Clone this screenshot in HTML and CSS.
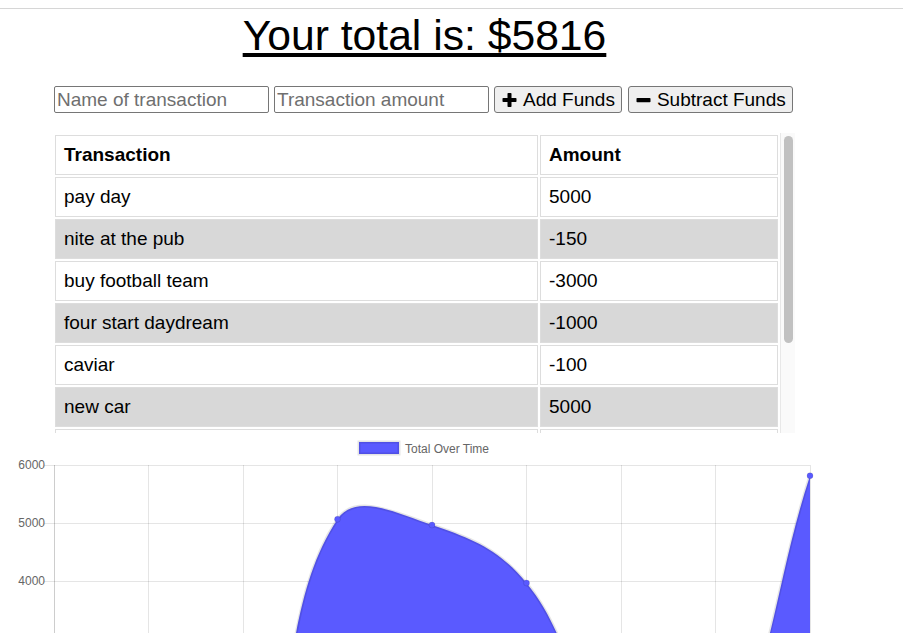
FILE: index.html
```html
<!DOCTYPE html>
<html lang="en">
<head>
<meta charset="utf-8">
<title>Budget Tracker</title>
<link rel="stylesheet" href="styles.css">
</head>
<body>
<div class="topbar"></div>
<main class="main">
  <h1 class="title"><span>Your total is: $5816</span></h1>
  <form class="controls">
    <input class="field" type="text" placeholder="Name of transaction">
    <input class="field" type="number" placeholder="Transaction amount">
    <button class="btn" type="button">
      <svg class="icon" viewBox="0 0 15 14"><rect x="5.5" y="0" width="4" height="14" rx="0.8"/><rect x="0.5" y="5" width="14" height="4" rx="0.8"/></svg>
      <span>Add Funds</span>
    </button>
    <button class="btn" type="button">
      <svg class="icon" viewBox="0 0 15 14"><rect x="0.5" y="5" width="14" height="4.3" rx="0.8"/></svg>
      <span>Subtract Funds</span>
    </button>
  </form>
  <div class="table-box">
    <div class="table-view">
      <table class="tx">
        <thead>
          <tr><th>Transaction</th><th class="col-amount">Amount</th></tr>
        </thead>
        <tbody>
          <tr><td>pay day</td><td>5000</td></tr>
          <tr><td>nite at the pub</td><td>-150</td></tr>
          <tr><td>buy football team</td><td>-3000</td></tr>
          <tr><td>four start daydream</td><td>-1000</td></tr>
          <tr><td>caviar</td><td>-100</td></tr>
          <tr><td>new car</td><td>5000</td></tr>
          <tr><td>bus fare</td><td>-30</td></tr>
          <tr><td>coffee</td><td>-4</td></tr>
          <tr><td>starting balance</td><td>100</td></tr>
        </tbody>
      </table>
    </div>
    <div class="scrollbar"><div class="thumb"></div></div>
  </div>
</main>
<svg class="chart" viewBox="0 433 903 200" width="903" height="200">
  <g class="legend">
    <rect x="359" y="442" width="40" height="12" fill="#5a5aff" stroke="rgba(0,0,0,0.1)" stroke-width="3"/>
    <text x="405" y="452.6">Total Over Time</text>
  </g>
  <g class="ylabels">
    <text x="45" y="469.3">6000</text>
    <text x="45" y="527.3">5000</text>
    <text x="45" y="585.3">4000</text>
  </g>
  <g class="grid" stroke="rgba(0,0,0,0.1)" stroke-width="1">
    <line x1="44" y1="465.5" x2="810" y2="465.5"/>
    <line x1="44" y1="523.5" x2="810" y2="523.5"/>
    <line x1="44" y1="581.5" x2="810" y2="581.5"/>
    <line x1="54.5" y1="465" x2="54.5" y2="640"/>
    <line x1="54.5" y1="465" x2="54.5" y2="640"/>
    <line x1="148.5" y1="465" x2="148.5" y2="640"/>
    <line x1="243.5" y1="465" x2="243.5" y2="640"/>
    <line x1="337.5" y1="465" x2="337.5" y2="640"/>
    <line x1="432.5" y1="465" x2="432.5" y2="640"/>
    <line x1="526.5" y1="465" x2="526.5" y2="640"/>
    <line x1="621.5" y1="465" x2="621.5" y2="640"/>
    <line x1="715.5" y1="465" x2="715.5" y2="640"/>
    <line x1="810.5" y1="465" x2="810.5" y2="640"/>
  </g>
  <path fill="#5a5aff" d="M54,813 L54,807.2 L148.5,807.4 L243,809.2 C300.7,721.2 279.8,605.9 337.5,519.2 C355.4,492.3 397.2,513.25 432,525 C472.8,538.8 499.4,549.7 526.5,583 C575,642.5 569.9,707.6 621,757 C645.5,780.7 697.6,792.4 715.5,765.7 C773.2,679.9 772.2,591.7 810,475.7 L810,813 Z"/>
  <path fill="none" stroke="rgba(0,0,0,0.1)" stroke-width="3" d="M54,807.2 L148.5,807.4 L243,809.2 C300.7,721.2 279.8,605.9 337.5,519.2 C355.4,492.3 397.2,513.25 432,525 C472.8,538.8 499.4,549.7 526.5,583 C575,642.5 569.9,707.6 621,757 C645.5,780.7 697.6,792.4 715.5,765.7 C773.2,679.9 772.2,591.7 810,475.7"/>
  <g class="points" fill="#5a5aff" stroke="rgba(0,0,0,0.1)" stroke-width="1">
    <circle cx="337.5" cy="519.2" r="3"/>
    <circle cx="432" cy="525" r="3"/>
    <circle cx="526.5" cy="583" r="3"/>
    <circle cx="810" cy="475.7" r="3"/>
  </g>
</svg>
</body>
</html>
```

FILE: styles.css
```css
html, body {
  margin: 0;
  padding: 0;
  overflow: hidden;
}

body {
  padding-top: 8px;
  font-family: "Liberation Sans", Arial, sans-serif;
  color: #000;
  background: #fff;
}

.topbar {
  border-top: 1px solid #d6d6d6;
}

.main {
  width: 741px;
  margin-left: 54px;
}

.title {
  margin: 2px 0 0;
  font-size: 42.67px;
  line-height: 49px;
  font-weight: normal;
  text-align: center;
}

.title span {
  text-decoration: underline;
}

.controls {
  display: flex;
  align-items: stretch;
  gap: 5px;
  height: 27px;
  margin: 26px 0 0;
}

.field {
  box-sizing: border-box;
  width: 215px;
  height: 27px;
  margin: 0;
  padding: 1px 2px;
  border: 1px solid #767676;
  border-radius: 2px;
  font-family: "Liberation Sans", Arial, sans-serif;
  font-size: 19px;
  color: #000;
  background: #fff;
  -moz-appearance: textfield;
}

.field::-webkit-outer-spin-button,
.field::-webkit-inner-spin-button {
  -webkit-appearance: none;
  margin: 0;
}

.field::placeholder {
  color: #6f6f6f;
}

.btn {
  box-sizing: border-box;
  display: flex;
  align-items: center;
  gap: 6px;
  height: 27px;
  margin: 0;
  padding: 0 6px 0 7px;
  border: 1px solid #767676;
  border-radius: 3px;
  background: #efefef;
  font-family: "Liberation Sans", Arial, sans-serif;
  font-size: 19px;
  color: #000;
}

.btn + .btn {
  margin-left: 1px;
}

.icon {
  width: 15px;
  height: 14px;
  fill: #000;
  flex: none;
}

.table-box {
  display: flex;
  width: 742px;
  height: 300px;
  margin: 20px 0 0 -1px;
}

.table-view {
  width: 727px;
  height: 300px;
  overflow: hidden;
}

.scrollbar {
  box-sizing: border-box;
  width: 15px;
  height: 300px;
  padding: 3px 2px 0 3px;
  background: #fafafa;
  border-left: 1px solid #e8e8e8;
}

.thumb {
  height: 207px;
  background: #c1c1c1;
  border-radius: 5px;
}

.tx {
  width: 100%;
  table-layout: fixed;
  border-collapse: separate;
  border-spacing: 2px;
  font-size: 19px;
}

.tx th,
.tx td {
  padding: 8px;
  line-height: 22px;
  border: 1px solid #dddddd;
  text-align: left;
  white-space: nowrap;
  overflow: hidden;
}

.tx th {
  font-weight: bold;
}

.tx .col-amount {
  width: 220px;
}

.tx tbody tr:nth-child(even) td {
  background: #d8d8d8;
}

.chart {
  display: block;
  font-family: "Liberation Sans", Arial, sans-serif;
}

.legend text {
  font-size: 12px;
  fill: #666;
}

.ylabels text {
  font-size: 12px;
  fill: #666;
  text-anchor: end;
}
```
